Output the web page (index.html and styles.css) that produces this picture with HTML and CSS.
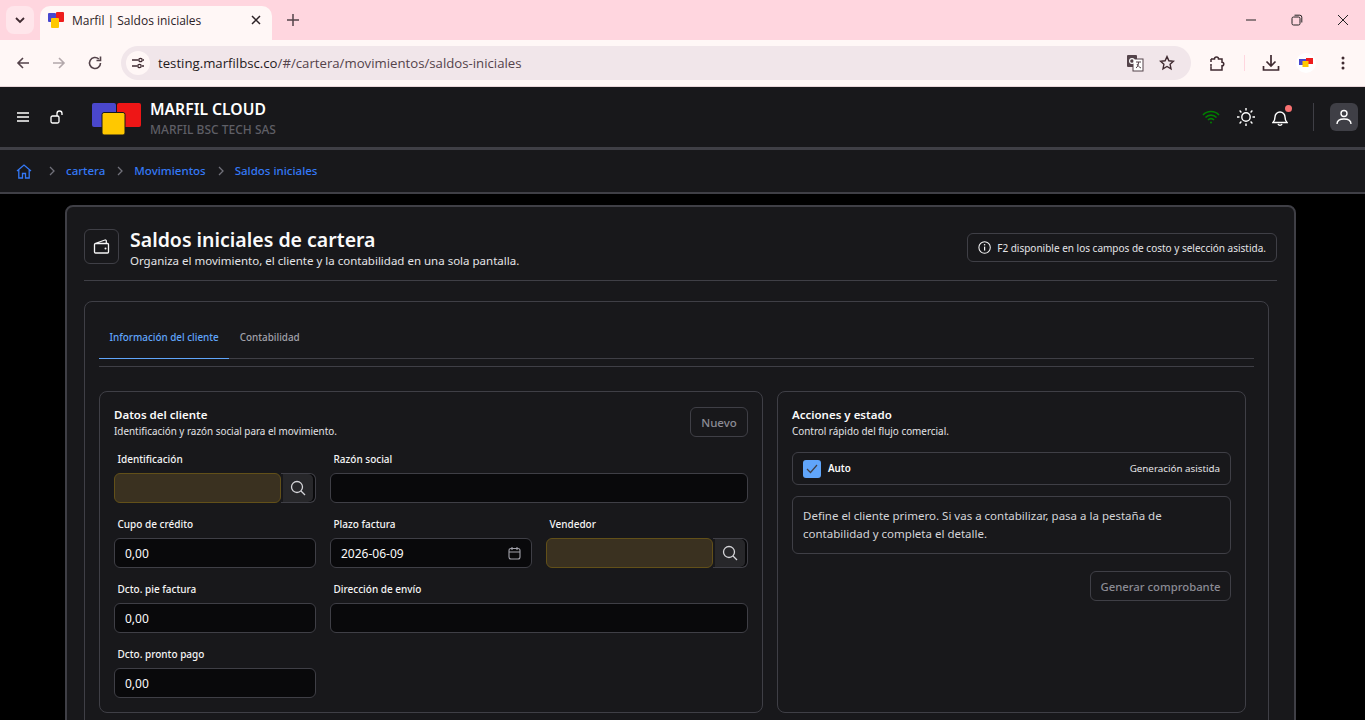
FILE: index.html
```html
<!DOCTYPE html>
<html lang="es">
<head>
<meta charset="UTF-8">
<title>Marfil | Saldos iniciales</title>
<link rel="stylesheet" href="styles.css">
</head>
<body>
<!-- barra del navegador -->
<div class="tabstrip">
	<button class="tabsearch"><svg width="12" height="12" viewBox="0 0 12 12"><path d="M2 4l4 4 4-4" fill="none" stroke="#3f2a30" stroke-width="1.8"/></svg></button>
	<div class="tab">
		<svg class="favicon" width="16" height="16" viewBox="0 0 16 16"><rect x="0" y="1" width="8" height="9" rx="1" fill="#4747cf"/><rect x="8" y="0" width="8" height="10" rx="1" fill="#ee1c1c"/><rect x="3" y="6" width="8" height="10" rx="1" fill="#ffc800"/></svg>
		<span class="tabtitle">Marfil | Saldos iniciales</span>
		<svg class="tabclose" width="10" height="10" viewBox="0 0 10 10"><path d="M1 1l8 8M9 1l-8 8" stroke="#2c2226" stroke-width="1.5"/></svg>
	</div>
	<svg class="newtab" width="14" height="14" viewBox="0 0 14 14"><path d="M7 1v12M1 7h12" stroke="#54434a" stroke-width="1.5"/></svg>
	<div class="winbtns">
		<svg width="12" height="12" viewBox="0 0 12 12"><path d="M1 6h10" stroke="#222" stroke-width="1"/></svg>
		<svg width="12" height="12" viewBox="0 0 12 12"><rect x="1" y="3" width="8" height="8" rx="1.5" fill="none" stroke="#222"/><path d="M3.5 1.2h5.3a2 2 0 0 1 2 2v5.3" fill="none" stroke="#222"/></svg>
		<svg width="12" height="12" viewBox="0 0 12 12"><path d="M1 1l10 10M11 1L1 11" stroke="#222" stroke-width="1"/></svg>
	</div>
</div>
<div class="toolbar">
	<svg class="tool" width="16" height="16" viewBox="0 0 16 16"><path d="M14 8H3M8 3L3 8l5 5" fill="none" stroke="#54434a" stroke-width="1.6"/></svg>
	<svg class="tool" width="16" height="16" viewBox="0 0 16 16"><path d="M2 8h11M8 3l5 5-5 5" fill="none" stroke="#b3a8ab" stroke-width="1.6"/></svg>
	<svg class="tool" width="16" height="16" viewBox="0 0 16 16"><path d="M13.5 8A5.5 5.5 0 1 1 11.8 4M13.5 1.5V5.5H9.5" fill="none" stroke="#54434a" stroke-width="1.6"/></svg>
	<div class="omnibox">
		<span class="sitebtn"><svg width="14" height="14" viewBox="0 0 14 14"><path d="M1 4h6M11 10h2M1 10h5M12 4h1" stroke="#3f2a30" stroke-width="1.3"/><circle cx="9.5" cy="4" r="1.7" fill="none" stroke="#3f2a30" stroke-width="1.3"/><circle cx="8.5" cy="10" r="1.7" fill="none" stroke="#3f2a30" stroke-width="1.3"/></svg></span>
		<span class="url">testing.marfilbsc.co<span class="urlpath">/#/cartera/movimientos/saldos-iniciales</span></span>
		<svg class="omniicon" width="18" height="18" viewBox="0 0 18 18"><rect x="1" y="1" width="10" height="12" rx="1" fill="#54434a"/><rect x="7" y="5" width="10" height="12" fill="#fff" stroke="#54434a"/><circle cx="6" cy="7" r="2.4" fill="none" stroke="#fff" stroke-width="1.1"/><path d="M10 8h5M12.5 8c0 3-1 5-2.500 6M11 10c1 2 2 3 4 4" fill="none" stroke="#54434a"/></svg>
		<svg class="omnistar" width="16" height="16" viewBox="0 0 16 16"><path d="M8 1.600l1.900 4.200 4.500.5-3.300 3 .9 4.500L8 11.500l-4 2.300.9-4.500-3.300-3 4.500-.5z" fill="none" stroke="#3f2a30" stroke-width="1.4"/></svg>
	</div>
	<svg class="extension" width="17" height="17" viewBox="0 0 17 17"><path d="M2 4h3.500a2 2 0 0 1 4 0H13v3.200a1.800 1.800 0 0 1 0 3.600V15H2v-3.500" fill="none" stroke="#3f2a30" stroke-width="1.500"/><path d="M2 4v3M2 11.500V9" stroke="#3f2a30" stroke-width="1.500"/></svg>
	<span class="toolsep"></span>
	<svg class="download" width="18" height="18" viewBox="0 0 18 18"><path d="M9 1v11M4.500 7.500L9 12l4.500-4.500M1.500 12v4h15v-4" fill="none" stroke="#3f2a30" stroke-width="1.700"/></svg>
	<span class="profile"><svg width="14" height="10" viewBox="0 0 14 10"><rect x="0" y="1" width="7" height="6" fill="#4747cf"/><rect x="7" y="0" width="7" height="6" fill="#ee1c1c"/><rect x="3.500" y="3" width="6" height="6" fill="#ffc800"/></svg></span>
	<svg class="dots" width="4" height="14" viewBox="0 0 4 14"><circle cx="2" cy="2" r="1.500" fill="#3f2a30"/><circle cx="2" cy="7" r="1.500" fill="#3f2a30"/><circle cx="2" cy="12" r="1.500" fill="#3f2a30"/></svg>
</div>

<!-- aplicacion -->
<header class="appbar">
	<svg class="menuicon" width="14" height="12" viewBox="0 0 14 12"><path d="M1 2h12M1 6h12M1 10h12" stroke="#fff" stroke-width="1.600"/></svg>
	<svg class="lockicon" width="14" height="14" viewBox="0 0 14 14"><rect x="1" y="6" width="8" height="7" rx="1.500" fill="none" stroke="#fff" stroke-width="1.300"/><path d="M7 6V3.500a2.500 2.500 0 0 1 5 0V5" fill="none" stroke="#fff" stroke-width="1.300"/></svg>
	<svg class="logo" width="50" height="32" viewBox="0 0 50 32"><rect x="1" y="0" width="24" height="24" rx="2" fill="#4a47cd"/><rect x="26" y="0" width="24" height="24" rx="2" fill="#ee1616"/><rect x="11" y="9.500" width="23" height="22.500" rx="2" fill="#ffc800" stroke="#18181b" stroke-width="1"/></svg>
	<div class="brand">
		<div class="brandname">MARFIL CLOUD</div>
		<div class="brandsub">MARFIL BSC TECH SAS</div>
	</div>
	<div class="appactions">
		<svg class="wifi" width="18" height="14" viewBox="0 0 18 14"><path d="M1 5a11 11 0 0 1 16 0M3.500 7.500a7.500 7.500 0 0 1 11 0M6 10a4 4 0 0 1 6 0" fill="none" stroke="#008000" stroke-width="1.600"/><circle cx="9" cy="12.500" r="1" fill="#008000"/></svg>
		<svg class="sun" width="18" height="18" viewBox="0 0 18 18"><circle cx="9" cy="9" r="4.200" fill="none" stroke="#fff" stroke-width="1.400"/><path d="M9 0v2.500M9 15.500V18M0 9h2.500M15.500 9H18M2.600 2.600l1.800 1.800M13.600 13.600l1.800 1.800M2.600 15.400l1.800-1.800M13.600 4.400l1.800-1.800" stroke="#fff" stroke-width="1.400"/></svg>
		<span class="bell">
			<svg width="16" height="17" viewBox="0 0 16 17"><path d="M1 13.500h14c-1.500-1.500-2-2.500-2-5.500a5 5 0 0 0-10 0c0 3-.5 4-2 5.500zM6 15a2.200 2.200 0 0 0 4 0" fill="none" stroke="#fff" stroke-width="1.400"/></svg>
			<span class="dot"></span>
		</span>
		<span class="appsep"></span>
		<span class="avatar"><svg width="16" height="16" viewBox="0 0 16 16"><circle cx="8" cy="4.500" r="3" fill="none" stroke="#fff" stroke-width="1.400"/><path d="M1 15c0-3.500 3-5 7-5s7 1.500 7 5" fill="none" stroke="#fff" stroke-width="1.400"/></svg></span>
	</div>
</header>
<nav class="crumbs">
	<svg class="homeicon" width="16" height="15" viewBox="0 0 16 15"><path d="M1 7l7-6 7 6M2.800 6v8h3.700V9.500h3V14h3.700V6" fill="none" stroke="#3478f6" stroke-width="1.300"/></svg>
	<svg class="chev" width="6" height="10" viewBox="0 0 6 10"><path d="M1 1l4 4-4 4" fill="none" stroke="#71717a" stroke-width="1.300"/></svg>
	<a>cartera</a>
	<svg class="chev" width="6" height="10" viewBox="0 0 6 10"><path d="M1 1l4 4-4 4" fill="none" stroke="#71717a" stroke-width="1.300"/></svg>
	<a>Movimientos</a>
	<svg class="chev" width="6" height="10" viewBox="0 0 6 10"><path d="M1 1l4 4-4 4" fill="none" stroke="#71717a" stroke-width="1.300"/></svg>
	<a>Saldos iniciales</a>
</nav>

<main class="content">
	<section class="card">
		<div class="pagehead">
			<span class="pageicon"><svg width="17" height="15" viewBox="0 0 17 15"><path d="M1.500 5.500V13a1 1 0 0 0 1 1h12a1 1 0 0 0 1-1V5.500a1 1 0 0 0-1-1h-12a1 1 0 0 0-1 1zM2 4.500L12 1a1 1 0 0 1 1.300 1v2.500" fill="none" stroke="#f4f4f5" stroke-width="1.300"/><circle cx="12.500" cy="9.500" r="1" fill="#f4f4f5"/></svg></span>
			<div class="pagetitles">
				<h1>Saldos iniciales de cartera</h1>
				<p>Organiza el movimiento, el cliente y la contabilidad en una sola pantalla.</p>
			</div>
			<div class="hint">
				<svg width="15" height="15" viewBox="0 0 15 15"><circle cx="7.500" cy="7.500" r="6.500" fill="none" stroke="#f4f4f5" stroke-width="1.200"/><path d="M7.500 6.500v4.500" stroke="#f4f4f5" stroke-width="1.400"/><circle cx="7.500" cy="4.300" r=".9" fill="#f4f4f5"/></svg>
				<span>F2 disponible en los campos de costo y selección asistida.</span>
			</div>
		</div>

		<div class="inner">
			<div class="tabs">
				<span class="tabitem active">Información del cliente</span>
				<span class="tabitem">Contabilidad</span>
			</div>
			<div class="tabrule"></div>

			<div class="panels">
				<div class="panel panelleft">
					<div class="panelhead">
						<div>
							<h2>Datos del cliente</h2>
							<p>Identificación y razón social para el movimiento.</p>
						</div>
						<button class="btn btnsmall">Nuevo</button>
					</div>
					<div class="formgrid">
						<div class="field">
							<label>Identificación</label>
							<div class="lookup">
								<div class="input required"></div>
								<span class="lookupbtn"><svg width="16" height="16" viewBox="0 0 16 16"><circle cx="7" cy="7" r="5.500" fill="none" stroke="#d4d4d8" stroke-width="1.300"/><path d="M11 11l4 4" stroke="#d4d4d8" stroke-width="1.300"/></svg></span>
							</div>
						</div>
						<div class="field span2">
							<label>Razón social</label>
							<div class="input"></div>
						</div>
						<div class="field">
							<label>Cupo de crédito</label>
							<div class="input">0,00</div>
						</div>
						<div class="field">
							<label>Plazo factura</label>
							<div class="input dateinput">
								<span>2026-06-09</span>
								<svg width="13" height="14" viewBox="0 0 13 14"><rect x="1" y="2.500" width="11" height="10.500" rx="2" fill="none" stroke="#a1a1aa" stroke-width="1.100"/><path d="M1 6h11M4 1v3M9 1v3" stroke="#a1a1aa" stroke-width="1.100"/></svg>
							</div>
						</div>
						<div class="field">
							<label>Vendedor</label>
							<div class="lookup">
								<div class="input required"></div>
								<span class="lookupbtn"><svg width="16" height="16" viewBox="0 0 16 16"><circle cx="7" cy="7" r="5.500" fill="none" stroke="#d4d4d8" stroke-width="1.300"/><path d="M11 11l4 4" stroke="#d4d4d8" stroke-width="1.300"/></svg></span>
							</div>
						</div>
						<div class="field">
							<label>Dcto. pie factura</label>
							<div class="input">0,00</div>
						</div>
						<div class="field span2">
							<label>Dirección de envío</label>
							<div class="input"></div>
						</div>
						<div class="field">
							<label>Dcto. pronto pago</label>
							<div class="input">0,00</div>
						</div>
					</div>
				</div>

				<div class="panel panelright">
					<h2>Acciones y estado</h2>
					<p>Control rápido del flujo comercial.</p>
					<div class="autorow">
						<span class="check"><svg width="12" height="10" viewBox="0 0 12 10"><path d="M1 5l3.500 3.500L11 1" fill="none" stroke="#3f3f46" stroke-width="1.200"/></svg></span>
						<strong>Auto</strong>
						<span class="autonote">Generación asistida</span>
					</div>
					<div class="notebox">Define el cliente primero. Si vas a contabilizar, pasa a la pestaña de contabilidad y completa el detalle.</div>
					<div class="panelfoot"><button class="btn">Generar comprobante</button></div>
				</div>
			</div>
		</div>
	</section>
</main>
</body>
</html>
```

FILE: styles.css
```css
*{
	box-sizing: border-box;
}
html,body{
	margin: 0;
	height: 720px;
	overflow: hidden;
}
body{
	background: #000;
	font-family: "Noto Sans", sans-serif;
	color: #fafafa;
	display: flex;
	flex-direction: column;
}
h1,h2,p{
	margin: 0;
}

/* navegador */
.tabstrip{
	height: 40px;
	flex: none;
	background: #ffd6df;
	display: flex;
	align-items: flex-end;
	padding-left: 6px;
}
.tabsearch{
	width: 28px;
	height: 28px;
	margin-bottom: 6px;
	border: 0;
	border-radius: 8px;
	background: #ffe6eb;
	padding: 0;
	display: flex;
	align-items: center;
	justify-content: center;
}
.tab{
	width: 232px;
	height: 34px;
	margin-left: 6px;
	background: #fff7f6;
	border-radius: 10px 10px 0 0;
	display: flex;
	align-items: center;
	padding: 0 0 6px 8px;
}
.favicon{
	flex: none;
}
.tabtitle{
	margin-left: 8px;
	flex: 1;
	font-family: "Open Sans", sans-serif;
	font-size: 12px;
	color: #2c2226;
}
.tabclose{
	margin-right: 11px;
}
.newtab{
	margin: 0 0 13px 14px;
}
.winbtns{
	margin-left: auto;
	margin-bottom: 14px;
	display: flex;
	gap: 34px;
	padding-right: 16px;
}
.toolbar{
	height: 47px;
	flex: none;
	background: #fff7f6;
	border-bottom: 1px solid #e7d5d8;
	display: flex;
	align-items: center;
	padding-left: 15px;
}
.tool{
	margin-right: 20px;
}
.omnibox{
	width: 1070px;
	height: 34px;
	margin-left: -2px;
	background: #f1e6ea;
	border-radius: 17px;
	display: flex;
	align-items: center;
	padding-left: 5px;
}
.sitebtn{
	width: 24px;
	height: 24px;
	border-radius: 50%;
	background: #fff7f6;
	display: flex;
	align-items: center;
	justify-content: center;
}
.url{
	margin-left: 8px;
	font-family: "Open Sans", sans-serif;
	font-size: 13.2px;
	color: #1f1a1c;
}
.urlpath{
	color: #54434a;
}
.omniicon{
	margin-left: auto;
}
.omnistar{
	margin: 0 16px 0 15px;
}
.extension{
	margin-left: 18px;
}
.toolsep{
	width: 1px;
	height: 16px;
	background: #ffd6df;
	margin: 0 17px 0 18px;
}
.profile{
	width: 20px;
	height: 20px;
	margin-left: 16px;
	border-radius: 50%;
	background: #fff;
	display: flex;
	align-items: center;
	justify-content: center;
}
.dots{
	margin-left: 25px;
}

/* encabezado */
.appbar{
	height: 63px;
	flex: none;
	background: #18181b;
	border-bottom: 3px solid #3f3f46;
	display: flex;
	align-items: center;
	padding: 0 7px 0 16px;
}
.lockicon{
	margin-left: 20px;
}
.logo{
	margin: 3px 0 0 27px;
}
.brand{
	margin-left: 9px;
	padding-top: 3px;
}
.brandname{
	font-size: 15.700px;
	font-weight: 600;
	line-height: 20px;
	color: #fff;
}
.brandsub{
	font-size: 12px;
	font-weight: 500;
	line-height: 18px;
	color: #5f5f66;
	margin-top: 2px;
}
.appactions{
	margin-left: auto;
	display: flex;
	align-items: center;
}
.sun{
	margin-left: 17px;
}
.bell{
	position: relative;
	margin-left: 17px;
	display: flex;
}
.dot{
	position: absolute;
	top: -4px;
	right: -4px;
	width: 7px;
	height: 7px;
	border-radius: 50%;
	background: #f87171;
}
.appsep{
	width: 1px;
	height: 28px;
	background: #3f3f46;
	margin: 0 16px 0 25px;
}
.avatar{
	width: 28px;
	height: 28px;
	border-radius: 6px;
	background: #3f3f46;
	display: flex;
	align-items: center;
	justify-content: center;
}
.crumbs{
	height: 44px;
	flex: none;
	background: #18181b;
	border-bottom: 2px solid #3f3f46;
	display: flex;
	align-items: center;
	padding-left: 16px;
	font-size: 11.500px;
	font-weight: 500;
	color: #3478f6;
}
.homeicon{
	margin-right: 17px;
}
.chev{
	margin-right: 11px;
}
.crumbs a{
	margin-top: -1px;
	margin-right: 12px;
}

/* contenido */
.content{
	flex: 1;
	min-height: 0;
	padding: 11px 69px 0 65px;
}
.card{
	border: 2px solid #3f3f46;
	border-radius: 8px 8px 0 0;
	background: #18181b;
	padding: 22px 17px 0 17px;
	height: 600px;
}
.pagehead{
	display: flex;
	align-items: flex-start;
	padding-bottom: 12px;
	border-bottom: 1px solid #3f3f46;
}
.pageicon{
	width: 35px;
	height: 35px;
	flex: none;
	border: 1px solid #3f3f46;
	border-radius: 6px;
	display: flex;
	align-items: center;
	justify-content: center;
}
.pagetitles{
	margin-left: 11px;
}
.pagetitles h1{
	font-size: 19.500px;
	font-weight: 600;
	line-height: 24px;
	margin-top: -1px;
}
.pagetitles p{
	font-size: 11.500px;
	line-height: 14px;
	margin-top: 2px;
	color: #e4e4e7;
}
.hint{
	margin-left: auto;
	margin-top: 4px;
	height: 29px;
	width: 310px;
	border: 1px solid #3f3f46;
	border-radius: 6px;
	display: flex;
	align-items: center;
	gap: 6px;
	padding: 0 10px;
	font-size: 10px;
	white-space: nowrap;
	color: #e4e4e7;
}
.inner{
	margin-top: 20px;
	margin-right: 8px;
	border: 1px solid #3f3f46;
	border-radius: 8px 8px 0 0;
	padding: 14px 14px 0;
	height: 420px;
}
.tabs{
	display: flex;
	height: 43px;
	border-bottom: 1px solid #3f3f46;
	font-size: 9.900px;
	font-weight: 500;
}
.tabitem{
	height: 43px;
	padding: 0 10.500px;
	line-height: 43px;
	color: #a1a1aa;
}
.tabitem.active{
	color: #60a5fa;
	border-bottom: 1px solid #60a5fa;
}
.tabrule{
	margin-top: 7px;
	border-top: 1px solid #3f3f46;
}
.panels{
	margin-top: 24px;
	display: flex;
	gap: 14px;
	padding-right: 8px;
	align-items: stretch;
}
.panel{
	height: 322px;
	border: 1px solid #3f3f46;
	border-radius: 8px;
	padding: 14px;
}
.panelleft{
	width: 664px;
	flex: none;
}
.panelright{
	flex: 1;
}
.panel h2{
	font-size: 11.500px;
	font-weight: 600;
	line-height: 17px;
}
.panel p{
	font-size: 9.900px;
	line-height: 15px;
	margin-top: 1px;
	color: #e4e4e7;
}
.panelhead{
	display: flex;
	justify-content: space-between;
	align-items: flex-start;
	height: 45px;
}
.btn{
	height: 30px;
	padding: 0 9.500px;
	background: transparent;
	border: 1px solid #3f3f46;
	border-radius: 6px;
	font-family: inherit;
	font-size: 11.300px;
	font-weight: 500;
	color: #8b8b94;
}
.btnsmall{
	margin-top: 1px;
	width: 58px;
	padding: 0;
	font-size: 11.500px;
}
.formgrid{
	display: grid;
	grid-template-columns: 202px 202px 202px;
	column-gap: 14px;
	row-gap: 13px;
}
.field.span2{
	grid-column: span 2;
}
.field label{
	display: block;
	height: 22px;
	padding: 0 3.500px;
	font-size: 10px;
	font-weight: 500;
	line-height: 16px;
	color: #f4f4f5;
}
.input{
	height: 30px;
	background: #09090b;
	border: 1px solid #3f3f46;
	border-radius: 6px;
	padding: 0 10px;
	font-size: 12px;
	line-height: 29px;
	color: #fafafa;
}
.input.required{
	flex: 1;
	background: #3a3120;
	border-color: #625019;
}
.dateinput{
	display: flex;
	justify-content: space-between;
	align-items: center;
}
.dateinput span{
	margin-top: 1px;
}
.lookup{
	display: flex;
}
.lookupbtn{
	width: 35px;
	height: 30px;
	flex: none;
	background: #27272a;
	border: 1px solid #3f3f46;
	border-left: 0;
	border-radius: 0 6px 6px 0;
	box-shadow: inset -2px 0 0 #09090b, inset 2px 0 0 #18181b;
	display: flex;
	align-items: center;
	justify-content: center;
}
.autorow{
	height: 33px;
	margin-top: 13px;
	border: 1px solid #3f3f46;
	border-radius: 6px;
	display: flex;
	align-items: center;
	padding: 0 10px;
	font-size: 9.800px;
}
.autorow strong{
	margin-left: 7px;
	font-weight: 600;
	margin-top: -1px;
}
.autonote{
	margin-left: auto;
	margin-top: -1px;
	color: #e4e4e7;
}
.check{
	width: 18px;
	height: 18px;
	background: #60a5fa;
	border-radius: 3px;
	display: flex;
	align-items: center;
	justify-content: center;
}
.notebox{
	margin-top: 11px;
	height: 58px;
	border: 1px solid #3f3f46;
	border-radius: 6px;
	padding: 10px;
	font-size: 11.500px;
	line-height: 18px;
	color: #d4d4d8;
}
.panelfoot{
	margin-top: 17px;
	display: flex;
	justify-content: flex-end;
}
```
